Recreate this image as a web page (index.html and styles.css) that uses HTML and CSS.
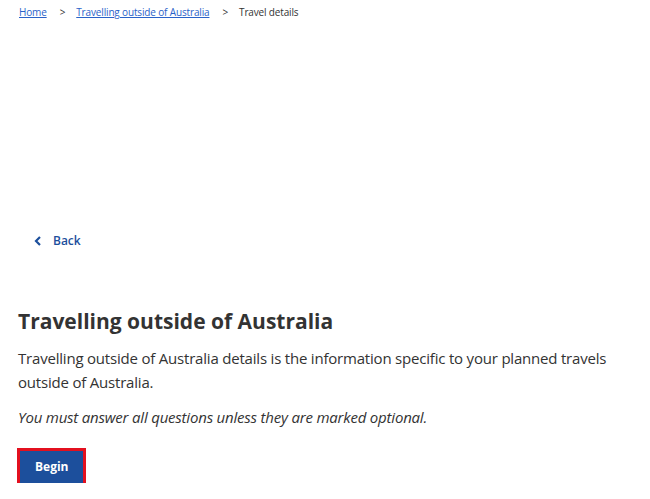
FILE: index.html
```html
<!DOCTYPE html>
<html lang="en">
<head>
  <meta charset="UTF-8">
  <title>Travel details</title>
  <link rel="stylesheet" href="styles.css">
</head>
<body>
  <nav class="breadcrumb">
    <a href="#">Home</a>
    <span class="sep">&gt;</span>
    <a href="#">Travelling outside of Australia</a>
    <span class="sep">&gt;</span>
    <span class="current">Travel details</span>
  </nav>

  <main class="content">
    <a class="back-link" href="#">
      <svg class="chevron" width="8" height="10" viewBox="0 0 8 10" aria-hidden="true">
        <path d="M6 1 L2 5 L6 9" fill="none" stroke="currentColor" stroke-width="2.2"/>
      </svg>
      <span>Back</span>
    </a>

    <h1>Travelling outside of Australia</h1>
    <p>Travelling outside of Australia details is the information specific to your planned travels outside of Australia.</p>
    <p class="note">You must answer all questions unless they are marked optional.</p>

    <button class="begin" type="button">Begin</button>
  </main>
</body>
</html>
```

FILE: styles.css
```css
body {
  margin: 0;
  font-family: 'Open Sans', 'Noto Sans', sans-serif;
  color: #333;
  background: #fff;
}

.breadcrumb {
  display: flex;
  align-items: center;
  gap: 11px;
  padding: 5px 0 0 19px;
  font-size: 10px;
  letter-spacing: -0.15px;
  line-height: 14px;
  color: #333;
}

.breadcrumb a {
  color: #2a62c9;
  text-decoration: underline;
}

.breadcrumb .sep {
  margin-left: 2px;
}

.content {
  padding: 0 18px;
}

.back-link {
  display: flex;
  align-items: center;
  gap: 11px;
  margin: 212px 0 0 16px;
  color: #1c4f9c;
  font-size: 12px;
  font-weight: 600;
  text-decoration: none;
  line-height: 20px;
}

h1 {
  margin: 55px 0 0;
  font-size: 21px;
  font-weight: 700;
  line-height: 30px;
  color: #333;
}

p {
  margin: 10px 0 0;
  font-size: 15px;
  line-height: 24px;
  letter-spacing: -0.2px;
}

.note {
  font-style: italic;
  margin-top: 11px;
}

.begin {
  margin-top: 22px;
  margin-left: 2px;
  padding: 8px 15px;
  background: #1c4f9c;
  color: #fff;
  border: 0;
  outline: 3px solid #e3101f;
  font-family: inherit;
  font-size: 12px;
  font-weight: 700;
  line-height: 16px;
  height: 32px;
}
```
